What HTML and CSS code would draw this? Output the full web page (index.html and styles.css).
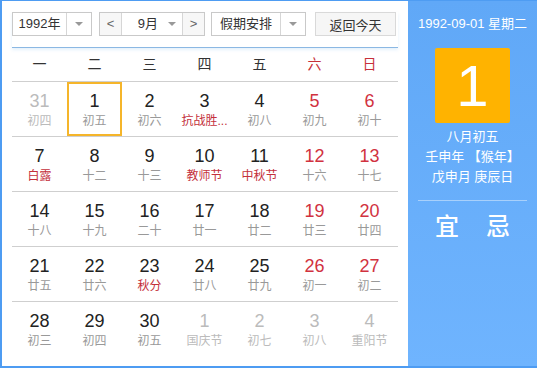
FILE: index.html
```html
<!DOCTYPE html>
<html lang="zh-CN">
<head>
    <meta charset="UTF-8">
    <title>万年历</title>
    <link rel="stylesheet" href="styles.css">
</head>
<body>
    <div class="calendar">
        <div class="main">
            <div class="toolbar">
                <div class="select year-select">
                    <span class="select-text">1992年</span>
                    <span class="select-arrow"><i class="caret"></i></span>
                </div>
                <div class="select month-select">
                    <span class="step">&lt;</span>
                    <span class="select-text month-text">9月</span>
                    <span class="month-arrow"><i class="caret"></i></span>
                    <span class="step step-next">&gt;</span>
                </div>
                <div class="select holiday-select">
                    <span class="select-text">假期安排</span>
                    <span class="select-arrow"><i class="caret"></i></span>
                </div>
                <button class="today-btn">返回今天</button>
            </div>

            <div class="weekdays">
                <span>一</span><span>二</span><span>三</span><span>四</span><span>五</span>
                <span class="weekend">六</span><span class="weekend">日</span>
            </div>

            <div class="days">
                <div class="week">
                    <div class="day other"><b>31</b><small>初四</small></div>
                    <div class="day selected"><b>1</b><small>初五</small></div>
                    <div class="day"><b>2</b><small>初六</small></div>
                    <div class="day festival"><b>3</b><small>抗战胜...</small></div>
                    <div class="day"><b>4</b><small>初八</small></div>
                    <div class="day weekend"><b>5</b><small>初九</small></div>
                    <div class="day weekend"><b>6</b><small>初十</small></div>
                </div>
                <div class="week">
                    <div class="day festival"><b>7</b><small>白露</small></div>
                    <div class="day"><b>8</b><small>十二</small></div>
                    <div class="day"><b>9</b><small>十三</small></div>
                    <div class="day festival"><b>10</b><small>教师节</small></div>
                    <div class="day festival"><b>11</b><small>中秋节</small></div>
                    <div class="day weekend"><b>12</b><small>十六</small></div>
                    <div class="day weekend"><b>13</b><small>十七</small></div>
                </div>
                <div class="week">
                    <div class="day"><b>14</b><small>十八</small></div>
                    <div class="day"><b>15</b><small>十九</small></div>
                    <div class="day"><b>16</b><small>二十</small></div>
                    <div class="day"><b>17</b><small>廿一</small></div>
                    <div class="day"><b>18</b><small>廿二</small></div>
                    <div class="day weekend"><b>19</b><small>廿三</small></div>
                    <div class="day weekend"><b>20</b><small>廿四</small></div>
                </div>
                <div class="week">
                    <div class="day"><b>21</b><small>廿五</small></div>
                    <div class="day"><b>22</b><small>廿六</small></div>
                    <div class="day festival"><b>23</b><small>秋分</small></div>
                    <div class="day"><b>24</b><small>廿八</small></div>
                    <div class="day"><b>25</b><small>廿九</small></div>
                    <div class="day weekend"><b>26</b><small>初一</small></div>
                    <div class="day weekend"><b>27</b><small>初二</small></div>
                </div>
                <div class="week">
                    <div class="day"><b>28</b><small>初三</small></div>
                    <div class="day"><b>29</b><small>初四</small></div>
                    <div class="day"><b>30</b><small>初五</small></div>
                    <div class="day other"><b>1</b><small>国庆节</small></div>
                    <div class="day other"><b>2</b><small>初七</small></div>
                    <div class="day other"><b>3</b><small>初八</small></div>
                    <div class="day other"><b>4</b><small>重阳节</small></div>
                </div>
            </div>
        </div>

        <div class="side">
            <div class="side-date">1992-09-01 星期二</div>
            <div class="side-day">1</div>
            <div class="side-lunar">八月初五</div>
            <div class="side-lunar">壬申年 【猴年】</div>
            <div class="side-lunar">戊申月 庚辰日</div>
            <div class="side-line"></div>
            <div class="side-yiji"><span>宜</span><span>忌</span></div>
        </div>
    </div>
</body>
</html>
```

FILE: styles.css
```css
body {
    margin: 0;
    font-family: 'Liberation Sans', 'Noto Sans CJK SC', sans-serif;
    color: #333;
}
.calendar {
    display: flex;
    width: 537px;
    height: 368px;
    box-sizing: border-box;
    border: 2px solid #4e9cf2;
    border-top-width: 1px;
    border-right: 0;
}
.main {
    width: 406px;
    padding: 11px 10px 0 10px;
    box-sizing: border-box;
    background: #fff;
}

/* toolbar */
.toolbar {
    display: flex;
    height: 24px;
    padding-bottom: 11px;
    border-bottom: 1px solid #8bb8e3;
    box-shadow: 0 2px 3px rgba(110, 175, 240, 0.18);
}
.select {
    display: flex;
    height: 24px;
    box-sizing: border-box;
    border: 1px solid #c9c9c9;
    font-size: 13px;
    line-height: 22px;
}
.select-text {
    flex: 1;
    text-align: center;
}
.select-arrow {
    width: 24px;
    border-left: 1px solid #d6d6d6;
    display: flex;
    align-items: center;
    justify-content: center;
}
.caret {
    width: 0;
    height: 0;
    border-left: 4px solid transparent;
    border-right: 4px solid transparent;
    border-top: 4px solid #999;
}
.year-select {
    width: 80px;
}
.month-select {
    width: 106px;
    margin-left: 7px;
}
.step {
    width: 21px;
    text-align: center;
    color: #666;
    background: #f7f7f7;
    border-right: 1px solid #d6d6d6;
}
.step-next {
    border-right: 0;
    border-left: 1px solid #d6d6d6;
}
.month-text {
    text-align: right;
    padding-right: 4px;
}
.month-arrow {
    width: 20px;
    display: flex;
    align-items: center;
    justify-content: center;
}
.holiday-select {
    width: 95px;
    margin-left: 6px;
}
.today-btn {
    width: 81px;
    height: 24px;
    margin-left: 9px;
    padding: 0;
    border: 1px solid #d9d9d9;
    background: #f6f6f6;
    color: #333;
    font-family: inherit;
    font-size: 13px;
}

/* grid */
.weekdays {
    display: flex;
    height: 33px;
    font-size: 14px;
    line-height: 33px;
}
.weekdays span {
    width: 55px;
    text-align: center;
}
.weekdays .weekend {
    color: #c7303a;
}
.week {
    display: flex;
    border-top: 1px solid #cfcfcf;
}
.day {
    width: 55px;
    height: 54px;
    box-sizing: border-box;
    border: 2px solid transparent;
    padding-top: 6px;
    text-align: center;
}
.day b {
    display: block;
    font-weight: normal;
    font-size: 18px;
    line-height: 22px;
    color: #222;
}
.day small {
    display: block;
    font-size: 12px;
    line-height: 18px;
    color: #999;
    white-space: nowrap;
}
.day.selected {
    border-color: #f5b52a;
}
.day.weekend b {
    color: #d1323f;
}
.day.festival small {
    color: #c4303b;
}
.day.other b,
.day.other small {
    color: #bbb;
}

/* side panel */
.side {
    flex: 1;
    background: linear-gradient(#60a8f7, #6fb4fe);
    color: #fff;
    text-align: center;
}
.side-date {
    margin-top: 13px;
    font-size: 13px;
    line-height: 20px;
}
.side-day {
    width: 75px;
    height: 75px;
    margin: 14px auto 4px;
    background: #ffb300;
    border-radius: 2px;
    font-size: 58px;
    line-height: 75px;
}
.side-lunar {
    font-size: 13px;
    line-height: 20px;
}
.side-line {
    height: 1px;
    margin: 13px 10px 0;
    background: #a8d0fb;
}
.side-yiji {
    display: flex;
    justify-content: center;
    gap: 27px;
    margin-top: 11px;
    font-size: 24px;
    font-weight: 500;
    line-height: 30px;
}
```
